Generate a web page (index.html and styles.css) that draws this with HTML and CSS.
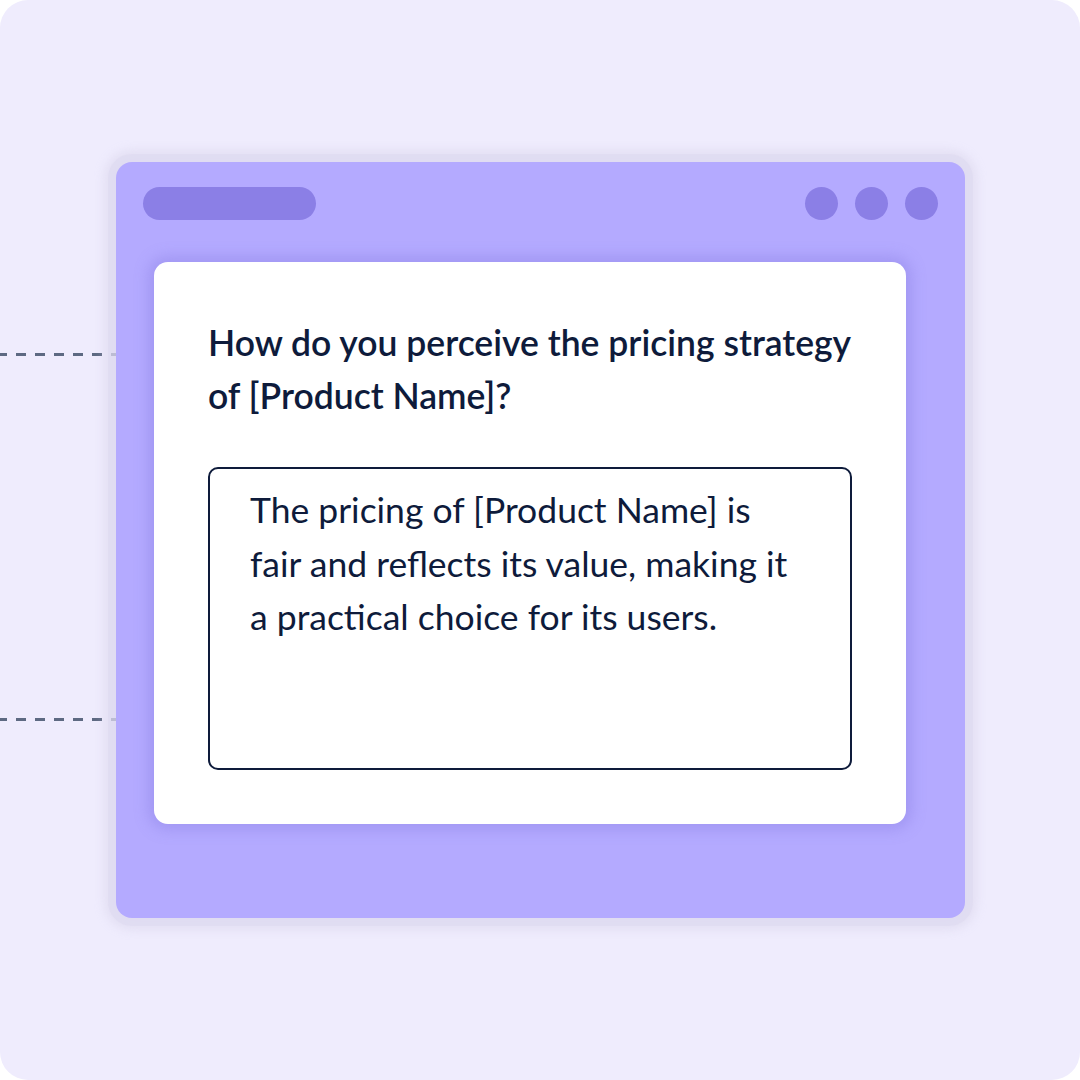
FILE: index.html
```html
<!DOCTYPE html>
<html lang="en">
<head>
    <meta charset="UTF-8">
    <meta name="viewport" content="width=device-width, initial-scale=1.0">
    <title>Survey Question</title>

    <link rel="stylesheet" href="styles.css">
</head>
<body>

    <div class="canvas">
        <!-- Connector lines on the left -->
        <div class="dash-line dash-top"></div>
        <div class="dash-line dash-bottom"></div>

        <div class="window">
            <div class="window-bar">
                <div class="address-pill"></div>
                <div class="window-dots">
                    <span class="dot"></span>
                    <span class="dot"></span>
                    <span class="dot"></span>
                </div>
            </div>

            <div class="question-card">
                <h2 class="question">How do you perceive the pricing strategy<br>of [Product Name]?</h2>
                <div class="answer-box">
                    <p>The pricing of [Product Name] is<br>fair and reflects its value, making it<br>a practical choice for its users.</p>
                </div>
            </div>
        </div>
    </div>

</body>
</html>
```

FILE: styles.css
```css
/* General Styles */
body {
    margin: 0;
    background-color: #ffffff;
    font-family: Lato, "Open Sans", sans-serif;
}

.canvas {
    position: relative;
    width: 1080px;
    height: 1080px;
    background-color: #efecfd;
    border-radius: 28px;
    overflow: hidden;
    padding: 162px 0 0 116px;
    box-sizing: border-box;
}

/* Dashed connectors */
.dash-line {
    position: absolute;
    left: 0;
    width: 116px;
    height: 3px;
    background-image: linear-gradient(to right, #5d6982 0 10px, transparent 10px 19px);
    background-size: 19px 3px;
    background-position: -3px 0;
}

.dash-top {
    top: 353px;
}

.dash-bottom {
    top: 718px;
}

/* Window */
.window {
    position: relative;
    width: 849px;
    height: 756px;
    box-sizing: border-box;
    padding: 25px 27px 0 38px;
    background-color: #b4aaff;
    border-radius: 16px;
    box-shadow: 0 0 0 8px rgba(222, 218, 240, 0.6), 0 0 10px 12px rgba(210, 206, 230, 0.4);
}

.window-bar {
    display: flex;
    justify-content: space-between;
    align-items: center;
    height: 33px;
    margin-left: -11px;
}

.address-pill {
    width: 173px;
    height: 33px;
    border-radius: 17px;
    background-color: #8b7fe6;
}

.window-dots {
    display: flex;
    gap: 17px;
}

.dot {
    width: 33px;
    height: 33px;
    border-radius: 50%;
    background-color: #8b7fe6;
}

/* Question card */
.question-card {
    margin-top: 42px;
    width: 752px;
    height: 562px;
    box-sizing: border-box;
    padding: 54px 54px 54px;
    background-color: #ffffff;
    border-radius: 14px;
    box-shadow: 0 0 14px 6px rgba(130, 118, 220, 0.35);
    display: flex;
    flex-direction: column;
    gap: 45px;
}

.question {
    margin: 0;
    font-size: 35.5px;
    line-height: 53px;
    font-weight: 600;
    color: #0e1b3b;
    white-space: nowrap;
}

.answer-box {
    flex: 1;
    border: 2px solid #0e1b3b;
    border-radius: 10px;
    padding: 14px 40px;
}

.answer-box p {
    margin: 0;
    font-size: 35.5px;
    line-height: 53.5px;
    color: #0e1b3b;
    white-space: nowrap;
}
```
